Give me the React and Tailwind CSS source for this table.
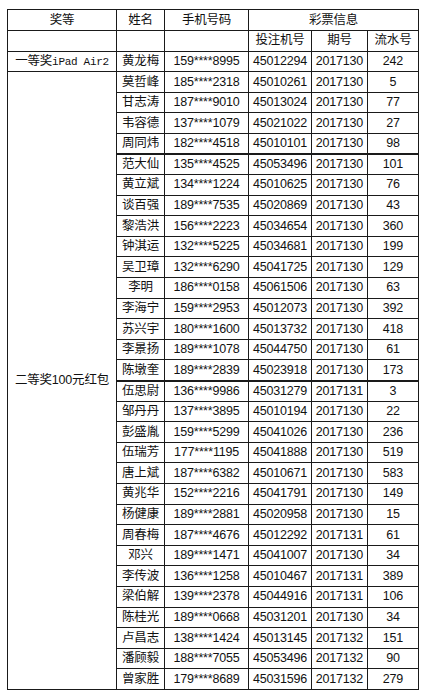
const rows = [
  ["莫哲峰", "185****2318", "45010261", "2017130", "5"],
  ["甘志涛", "187****9010", "45013024", "2017130", "77"],
  ["韦容德", "137****1079", "45021022", "2017130", "27"],
  ["周同炜", "182****4518", "45010101", "2017130", "98", true],
  ["范大仙", "135****4525", "45053496", "2017130", "101"],
  ["黄立斌", "134****1224", "45010625", "2017130", "76"],
  ["谈百强", "189****7535", "45020869", "2017130", "43"],
  ["黎浩洪", "156****2223", "45034654", "2017130", "360"],
  ["钟淇运", "132****5225", "45034681", "2017130", "199"],
  ["吴卫璋", "132****6290", "45041725", "2017130", "129"],
  ["李明", "186****0158", "45061506", "2017130", "63"],
  ["李海宁", "159****2953", "45012073", "2017130", "392"],
  ["苏兴宇", "180****1600", "45013732", "2017130", "418"],
  ["李景扬", "189****1078", "45044750", "2017130", "61"],
  ["陈墩奎", "189****2839", "45023918", "2017130", "173", true],
  ["伍思尉", "136****9986", "45031279", "2017131", "3"],
  ["邹丹丹", "137****3895", "45010194", "2017130", "22"],
  ["彭盛胤", "159****5299", "45041026", "2017130", "236"],
  ["伍瑞芳", "177****1195", "45041888", "2017130", "519"],
  ["唐上斌", "187****6382", "45010671", "2017130", "583"],
  ["黄兆华", "152****2216", "45041791", "2017130", "149"],
  ["杨健康", "189****2881", "45020958", "2017130", "15"],
  ["周春梅", "187****4676", "45012292", "2017131", "61"],
  ["邓兴", "189****1471", "45041007", "2017130", "34"],
  ["李传波", "136****1258", "45010467", "2017131", "389"],
  ["梁伯解", "139****2378", "45044916", "2017131", "106"],
  ["陈桂光", "189****0668", "45031201", "2017130", "34"],
  ["卢昌志", "138****1424", "45013145", "2017132", "151"],
  ["潘顾毅", "188****7055", "45053496", "2017132", "90"],
  ["曾家胜", "179****8689", "45031596", "2017132", "279"],
];

export default function App() {
  const cell = "border border-[#1a1a1a] text-center align-middle p-0 whitespace-nowrap";
  const thick = "border border-b-2 border-[#1a1a1a] text-center align-middle p-0 whitespace-nowrap";
  return (
    <div className="w-[424px] h-[698px] bg-white pt-[9px] pl-[7px] font-['Liberation_Sans','Noto_Sans_CJK_SC',sans-serif] text-[12.5px] text-[#111] tracking-[-0.2px]">
      <table className="table-fixed border-collapse w-[411px]">
        <colgroup>
          <col className="w-[109px]" />
          <col className="w-[48px]" />
          <col className="w-[84px]" />
          <col className="w-[63px]" />
          <col className="w-[56px]" />
          <col className="w-[51px]" />
        </colgroup>
        <tbody>
          <tr className="h-[21px]">
            <td className={cell}>奖等</td>
            <td className={cell}>姓名</td>
            <td className={cell}>手机号码</td>
            <td className={cell} colSpan={3}>彩票信息</td>
          </tr>
          <tr className="h-[20.5px]">
            <td className={cell}></td>
            <td className={cell}></td>
            <td className={cell}></td>
            <td className={cell}>投注机号</td>
            <td className={cell}>期号</td>
            <td className={cell}>流水号</td>
          </tr>
          <tr className="h-[20.6px]">
            <td className={cell}>
              一等奖<span className="font-['Liberation_Mono',monospace] text-[11px] tracking-[-0.3px]">iPad Air2</span>
            </td>
            <td className={cell}>黄龙梅</td>
            <td className={cell}>159****8995</td>
            <td className={cell}>45012294</td>
            <td className={cell}>2017130</td>
            <td className={cell}>242</td>
          </tr>
          {rows.map((r, i) => {
            const c = r[5] ? thick : cell;
            return (
              <tr key={i} className="h-[20.6px]">
                {i === 0 && (
                  <td className={cell} rowSpan={rows.length}>
                    二等奖100元红包
                  </td>
                )}
                <td className={c}>{r[0]}</td>
                <td className={c}>{r[1]}</td>
                <td className={c}>{r[2]}</td>
                <td className={c}>{r[3]}</td>
                <td className={c}>{r[4]}</td>
              </tr>
            );
          })}
        </tbody>
      </table>
    </div>
  );
}
